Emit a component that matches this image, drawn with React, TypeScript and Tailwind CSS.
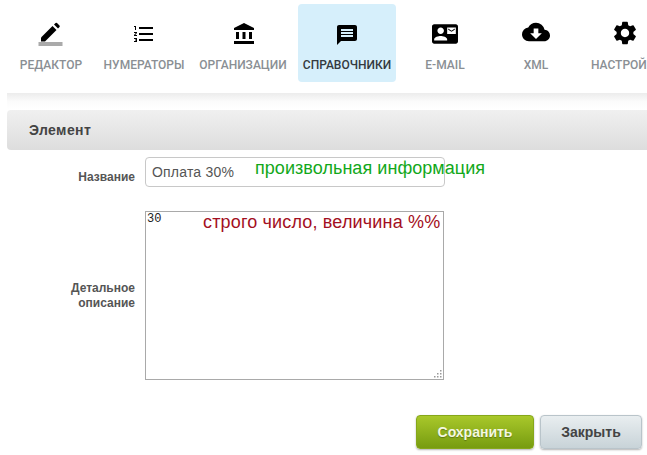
import React from 'react';
import {
  MdAccountBalance,
  MdCloudDownload,
  MdContactMail,
  MdFormatListNumbered,
  MdMessage,
  MdSettings,
} from 'react-icons/md';

const PencilIcon = () => (
  <svg width="28" height="28" viewBox="0 0 28 28">
    <path d="M4 17.5 15.5 6l4 4L8 21.5H4z" fill="#000" />
    <path d="M17 4.5 18.6 3a1 1 0 0 1 1.4 0l2.5 2.5a1 1 0 0 1 0 1.4L21 8.5z" fill="#000" />
    <rect x="1.5" y="22" width="24" height="4" fill="#aaa" />
  </svg>
);

const tabs = [
  { label: 'РЕДАКТОР', width: 'w-[98px]', icon: <PencilIcon /> },
  { label: 'НУМЕРАТОРЫ', width: 'w-[88px]', icon: <MdFormatListNumbered className="text-[24px]" /> },
  { label: 'ОРГАНИЗАЦИИ', width: 'w-[110px]', icon: <MdAccountBalance className="ml-[2px] -mt-[1px] text-[24px]" /> },
  { label: 'СПРАВОЧНИКИ', width: 'w-[98px]', icon: <MdMessage className="mt-[2px] text-[24px]" />, active: true },
  { label: 'E-MAIL', width: 'w-[98px]', icon: <MdContactMail className="text-[26px]" /> },
  { label: 'XML', width: 'w-[84px]', icon: <MdCloudDownload className="-mt-[4px] text-[28px]" /> },
  { label: 'НАСТРОЙКИ', width: 'w-[98px]', icon: <MdSettings className="-ml-[5px] -mt-[2px] text-[28px]" /> },
];

const App = () => {
  return (
    <div className="h-[455px] w-[647px] overflow-hidden bg-white font-['Liberation_Sans',sans-serif]">
      <div className="flex h-[93px] w-[662px] items-start pl-[2px] pt-[4px]">
        {tabs.map((tab) => (
          <div
            key={tab.label}
            className={`flex h-[78px] shrink-0 flex-col items-center rounded-[4px] pt-[15px] ${tab.width} ${tab.active ? 'bg-[#d6effb]' : ''}`}
          >
            <div className="flex h-[30px] items-center justify-center text-black">{tab.icon}</div>
            <span
              className={`mt-[8px] whitespace-nowrap font-['Roboto',sans-serif] text-[12px] font-medium leading-[16px] ${tab.active ? 'text-[#333a40]' : 'text-[#8a8f94]'}`}
            >
              {tab.label}
            </span>
          </div>
        ))}
      </div>
      <div className="ml-[7px] h-[17px] bg-gradient-to-b from-[#ececec] via-[#fbfbfb] to-white" />

      <div className="ml-[7px] flex h-[40px] items-center rounded-l-[4px] bg-gradient-to-b from-[#f0f0f0] to-[#dddddd] pl-[22px]">
        <span className="text-[14px] font-bold tracking-[0.4px] text-[#444]">Элемент</span>
      </div>

      <div className="mt-[7px] flex">
        <div className="flex w-[135px] items-center justify-end pt-[9px] text-[12px] font-bold text-[#555]">
          Название
        </div>
        <div className="relative ml-[10px]">
          <div className="flex h-[30px] w-[300px] items-center rounded-[4px] border border-[#c8c8c8] pl-[6px] text-[14px] tracking-[0.2px] text-[#555]">
            Оплата 30%
          </div>
          <span className="absolute left-[110px] top-[-1px] whitespace-nowrap text-[18px] leading-[24px] tracking-[0.05px] text-[#12a81a]">
            произвольная информация
          </span>
        </div>
      </div>

      <div className="mt-[24px] flex">
        <div className="flex w-[135px] items-center justify-end text-right text-[12px] font-bold leading-[15px] text-[#555]">
          <span>
            Детальное
            <br />
            описание
          </span>
        </div>
        <div className="relative ml-[10px] h-[169px] w-[299px] border border-[#a9a9a9]">
          <span className="absolute left-[1px] top-[1px] font-['Liberation_Mono',monospace] text-[12px] leading-[13px] text-[#222]">
            30
          </span>
          <span className="absolute left-[57px] top-[-2px] whitespace-nowrap text-[18px] leading-[24px] tracking-[0.16px] text-[#a30f22]">
            строго число, величина %%
          </span>
          <svg className="absolute bottom-[1px] right-[1px]" width="9" height="9" viewBox="0 0 9 9" fill="#999">
            <rect x="7" y="1" width="1.5" height="1.5" />
            <rect x="4" y="4" width="1.5" height="1.5" />
            <rect x="7" y="4" width="1.5" height="1.5" />
            <rect x="1" y="7" width="1.5" height="1.5" />
            <rect x="4" y="7" width="1.5" height="1.5" />
            <rect x="7" y="7" width="1.5" height="1.5" />
          </svg>
        </div>
      </div>

      <div className="mt-[35px] flex justify-end gap-[6px] pr-[5px]">
        <button className="h-[34px] w-[118px] rounded-[4px] border border-[#86a71a] bg-gradient-to-b from-[#a9c82a] to-[#779c0f] text-[14px] font-bold text-[#f4f8e0] shadow-[0_1px_2px_rgba(0,0,0,0.3)] [text-shadow:0_1px_1px_rgba(0,0,0,0.3)]">
          Сохранить
        </button>
        <button className="h-[34px] w-[102px] rounded-[4px] border border-[#b9c4ca] bg-gradient-to-b from-[#e9eef0] to-[#c8d3d8] text-[14px] font-bold text-[#444] shadow-[0_1px_2px_rgba(0,0,0,0.3)]">
          Закрыть
        </button>
      </div>
    </div>
  );
};

export default App;
